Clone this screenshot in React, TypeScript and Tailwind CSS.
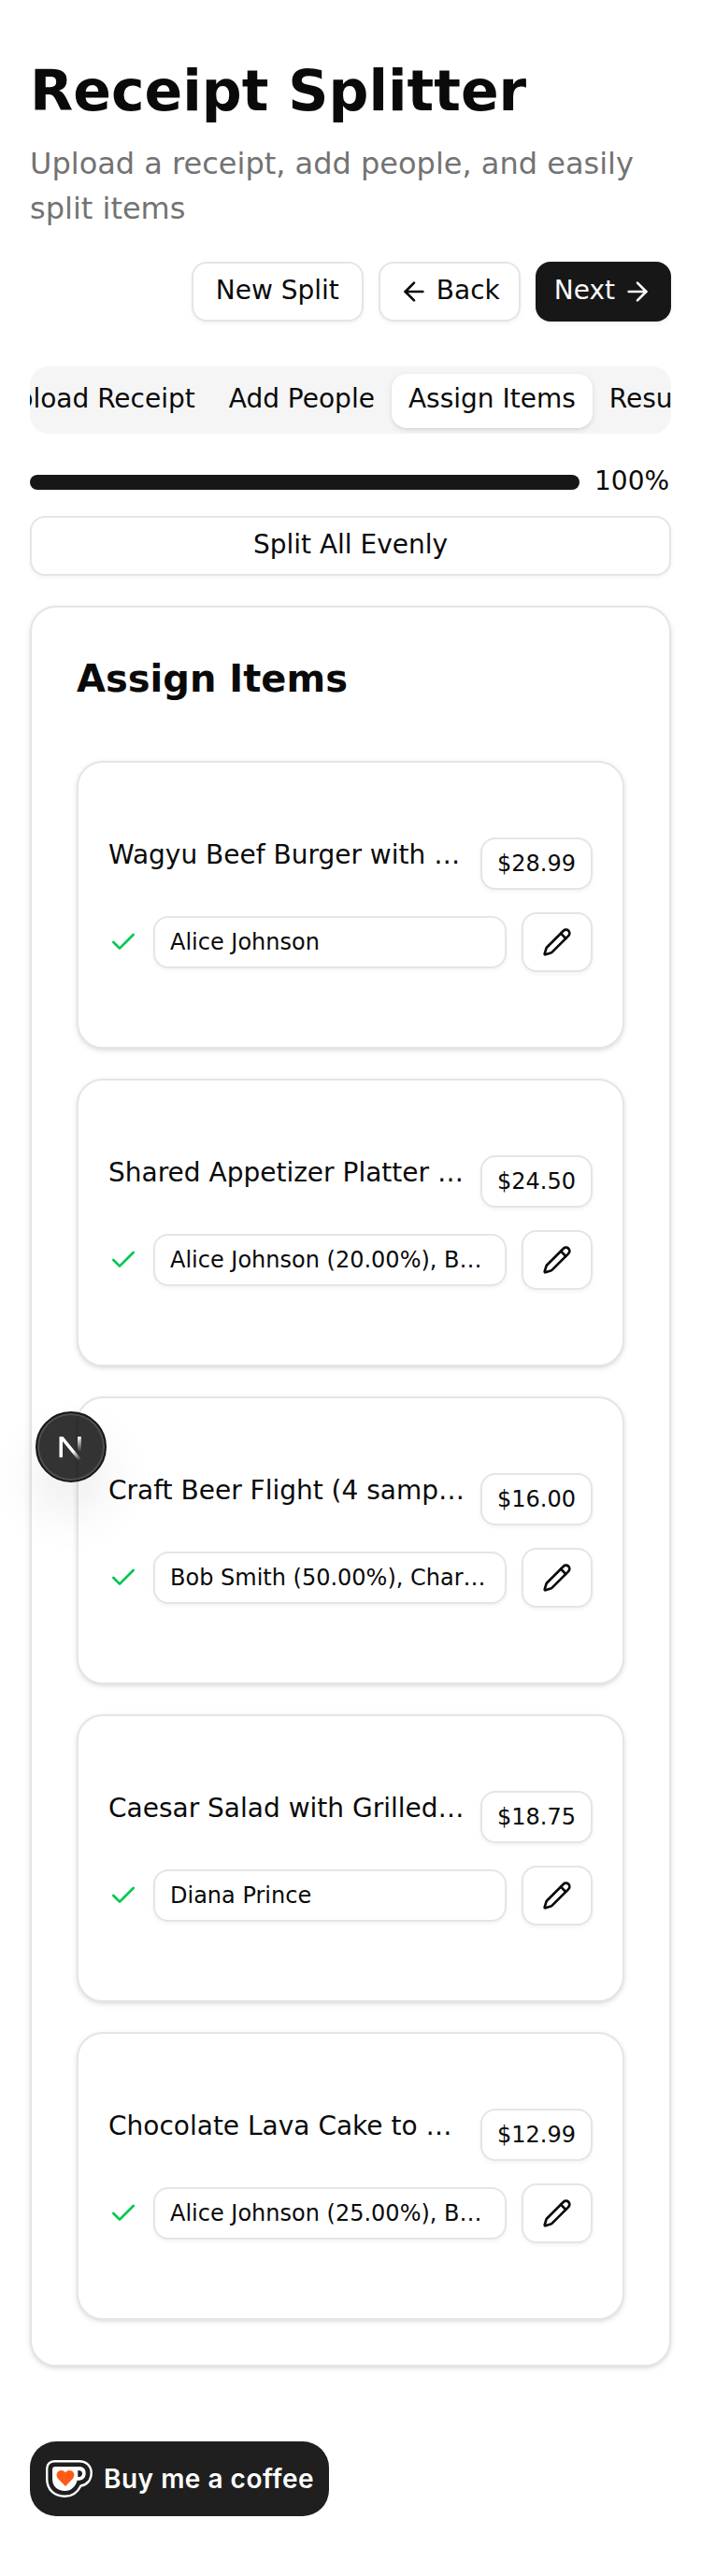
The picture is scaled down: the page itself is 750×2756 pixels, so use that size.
import { ArrowLeft, ArrowRight, Check, Pencil } from "lucide-react";

const outline =
  "border-2 border-[#e5e5e5] bg-white rounded-[16px] shadow-[0_2px_4px_rgba(0,0,0,0.05)]";
const cardStyle =
  "border-2 border-[#e5e5e5] bg-white rounded-[28px] shadow-[0_2px_6px_rgba(0,0,0,0.1),0_2px_4px_-2px_rgba(0,0,0,0.1)]";

const items = [
  { name: "Wagyu Beef Burger with Truffle Fries", price: "$28.99", people: "Alice Johnson" },
  { name: "Shared Appetizer Platter for the Table", price: "$24.50", people: "Alice Johnson (20.00%), Bob Smith (20.00%)" },
  { name: "Craft Beer Flight (4 samples)", price: "$16.00", people: "Bob Smith (50.00%), Charlie Brown (50.00%)" },
  { name: "Caesar Salad with Grilled Chicken", price: "$18.75", people: "Diana Prince" },
  { name: "Chocolate Lava Cake to Share", price: "$12.99", people: "Alice Johnson (25.00%), Bob Smith (25.00%)" },
];

function ItemCard({ item }: { item: (typeof items)[number] }) {
  return (
    <div className={`h-[308px] px-8 pt-20 ${cardStyle}`}>
      <div className="flex items-start gap-4">
        <div className="min-w-0 flex-1 truncate text-[28px] leading-[38px]">{item.name}</div>
        <div className={`flex h-14 w-[120px] items-center justify-center text-[24px] leading-8 ${outline}`}>{item.price}</div>
      </div>
      <div className="mt-6 flex items-center gap-4">
        <Check className="size-8 shrink-0 text-[#00c950]" />
        <div className={`h-14 min-w-0 flex-1 px-4 py-2.5 text-[24px] leading-8 ${outline}`}>
          <div className="truncate">{item.people}</div>
        </div>
        <button className={`flex h-16 w-[76px] shrink-0 items-center justify-center ${outline}`}>
          <Pencil className="size-8" />
        </button>
      </div>
    </div>
  );
}

function NextBadge() {
  return (
    <div className="absolute left-[38px] top-[1510px] flex size-[76px] items-center justify-center rounded-full border-2 border-[#171717] bg-[#000000cc] shadow-[inset_0_0_0_2px_rgba(255,255,255,0.14),0_32px_64px_-16px_rgba(0,0,0,0.24)]">
      <svg width="40" height="40" viewBox="0 0 40 40" fill="none">
        <defs>
          <linearGradient id="diag" x1="20" y1="20" x2="30" y2="34" gradientUnits="userSpaceOnUse">
            <stop offset="0.3" stopColor="#fff" />
            <stop offset="1" stopColor="#fff" stopOpacity="0" />
          </linearGradient>
          <linearGradient id="stem" x1="0" y1="9" x2="0" y2="25" gradientUnits="userSpaceOnUse">
            <stop stopColor="#fff" />
            <stop offset="1" stopColor="#fff" stopOpacity="0" />
          </linearGradient>
        </defs>
        <path d="M7.5 31.3V9h4L32 34.2l-2.8 2L11 14V31.3z" fill="url(#diag)" />
        <path d="M27 9h3.8V25H27z" fill="url(#stem)" />
      </svg>
    </div>
  );
}

function Cup() {
  return (
    <svg width="50" height="40" viewBox="0 0 50 40" fill="none" className="shrink-0">
      <path d="M9 1.2H36C43 1.2 48.7 6 48.7 13.5C48.7 21.5 44 26.5 37.5 27.5C34 34.5 28 38.8 20.5 38.8C9 38.8 1.2 31.5 1.2 20V9C1.2 4.5 4.5 1.2 9 1.2Z" stroke="#fff" strokeWidth="2.4" />
      <path d="M10 7H35.5C40 7 42.7 9.6 42.7 14C42.7 19 39.5 21.8 34.5 21.8H33.6C32 28.5 27 33 20.5 33C12.5 33 7 28 7 20V10C7 8.2 8.2 7 10 7ZM34.3 11V18C37.4 18 39 16.8 39 14.4C39 12 37.4 11 34.3 11Z" fill="#fff" fillRule="evenodd" />
      <path d="M21 28L13.4 20.2C9.5 16 12.5 11 16.6 11C18.8 11 20.2 12.1 21 13.4C21.8 12.1 23.2 11 25.4 11C29.5 11 32.5 16 28.6 20.2Z" fill="#ff5a16" />
    </svg>
  );
}

export default function App() {
  return (
    <div className="relative h-[2756px] w-[750px] overflow-hidden bg-white px-8 pt-[61px] font-['DejaVu_Sans',sans-serif] text-[#0a0a0a]">
      <h1 className="text-[60px] font-bold leading-[72px]">Receipt Splitter</h1>
      <p className="mt-[18px] text-[32px] leading-[48px] text-[#737373]">Upload a receipt, add people, and easily split items</p>
      <div className="mt-[33px] flex justify-end gap-4 text-[28px] leading-10">
        <button className={`flex h-16 items-center px-6 pb-0.5 ${outline}`}>New Split</button>
        <button className={`flex h-16 items-center gap-2 px-5 ${outline}`}>
          <ArrowLeft className="size-8" />
          <span className="pb-0.5">Back</span>
        </button>
        <button className="flex h-16 items-center gap-2 rounded-[16px] bg-[#171717] px-5 text-[#fafafa] shadow-[0_2px_4px_rgba(0,0,0,0.05)]">
          <span className="pb-0.5">Next</span>
          <ArrowRight className="size-8" />
        </button>
      </div>

      <div className="mt-12 flex h-[72px] justify-center overflow-hidden rounded-[20px] bg-[#f5f5f5] pt-2 text-[28px] leading-10">
        {["Upload Receipt", "Add People", "Assign Items", "Results"].map((t) => (
          <div
            key={t}
            className={
              t === "Assign Items"
                ? "h-[58px] shrink-0 rounded-[16px] bg-white px-[18px] pt-[7px] shadow-[0_2px_6px_rgba(0,0,0,0.1),0_2px_4px_-2px_rgba(0,0,0,0.1)]"
                : "h-[58px] shrink-0 px-[18px] pt-[7px]"
            }
          >
            {t}
          </div>
        ))}
      </div>

      <div className="mt-8 flex h-10 items-center gap-4">
        <div className="h-4 flex-1 rounded-full bg-[#171717]" />
        <span className="w-[82px] pb-0.5 text-[28px] leading-10">100%</span>
      </div>
      <button className={`mt-4 flex h-16 w-full items-center justify-center pb-0.5 text-[28px] leading-10 ${outline}`}>Split All Evenly</button>

      <div className={`mt-8 h-[1884px] px-12 pt-12 ${cardStyle}`}>
        <h2 className="text-[40px] font-bold leading-[56px]">Assign Items</h2>
        <div className="mt-[60px] flex flex-col gap-8">
          {items.map((item) => (
            <ItemCard key={item.name} item={item} />
          ))}
        </div>
      </div>

      <div className="mt-20 flex h-20 w-80 items-center rounded-[28px] bg-[#1f1f1f] pl-[17px] font-['Inter',sans-serif] text-[28px] font-semibold text-white">
        <Cup />
        <span className="ml-3 whitespace-nowrap tracking-[0.5px]">Buy me a coffee</span>
      </div>
      <NextBadge />
    </div>
  );
}
